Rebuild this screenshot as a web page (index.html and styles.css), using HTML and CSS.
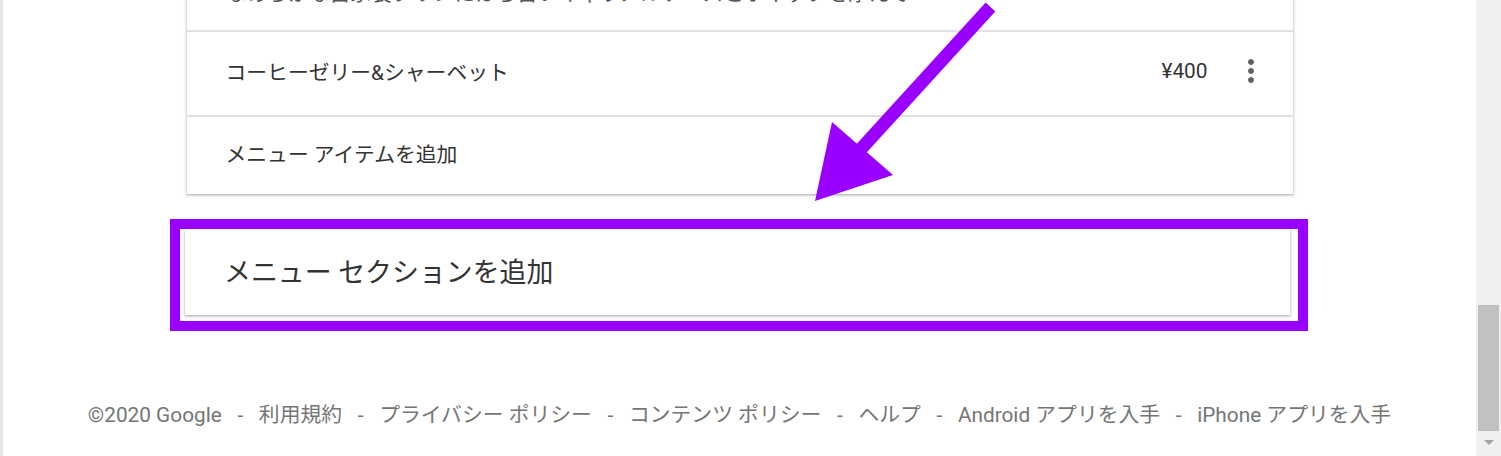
FILE: index.html
```html
<!DOCTYPE html>
<html lang="ja">
<head>
    <meta charset="UTF-8">
    <title>メニュー</title>
    <link rel="stylesheet" href="styles.css">
</head>
<body>
<div class="page">
    <main class="content">
        <section class="menu-card">
            <div class="item item-long">
                <div class="item-text">
                    <div class="item-name">自家製プリン</div>
                    <div class="item-desc">なめらかな自家製プリンにほろ苦いキャラメルソースとホイップを添えて</div>
                </div>
            </div>
            <div class="item">
                <div class="item-name">コーヒーゼリー&amp;シャーベット</div>
                <div class="item-price">¥400</div>
                <button class="more" aria-label="その他">
                    <svg viewBox="0 0 24 24" width="36" height="36"><path d="M12 8c1.1 0 2-.9 2-2s-.9-2-2-2-2 .9-2 2 .9 2 2 2zm0 2c-1.1 0-2 .9-2 2s.9 2 2 2 2-.9 2-2-.9-2-2-2zm0 6c-1.1 0-2 .9-2 2s.9 2 2 2 2-.9 2-2-.9-2-2-2z"/></svg>
                </button>
            </div>
            <div class="item item-add">メニュー アイテムを追加</div>
        </section>

        <div class="highlight">
            <div class="add-section">メニュー セクションを追加</div>
        </div>

        <footer class="footer">
            <span>©2020 Google</span>
            <span class="sep">-</span>
            <a>利用規約</a>
            <span class="sep">-</span>
            <a>プライバシー ポリシー</a>
            <span class="sep">-</span>
            <a>コンテンツ ポリシー</a>
            <span class="sep">-</span>
            <a>ヘルプ</a>
            <span class="sep">-</span>
            <a>Android アプリを入手</a>
            <span class="sep">-</span>
            <a>iPhone アプリを入手</a>
        </footer>
    </main>

    <div class="scrollbar">
        <div class="thumb"></div>
        <div class="arrow-down"></div>
    </div>

    <svg class="pointer" width="1501" height="456" viewBox="0 0 1501 456">
        <line x1="990.5" y1="7" x2="860" y2="150" stroke="#9900ff" stroke-width="13"/>
        <polygon points="832,122 893,175 815,201" fill="#9900ff"/>
    </svg>
</div>
</body>
</html>
```

FILE: styles.css
```css
html, body {
    margin: 0;
    height: 100%;
}
body {
    background: #FFF;
    overflow: hidden;
    font-family: Roboto, "Noto Sans CJK JP", sans-serif;
    color: #333;
}
.page {
    position: relative;
    display: flex;
    height: 456px;
    overflow: hidden;
}
.content {
    flex: 1;
    border-left: 3px solid #e6e6ea;
    display: flex;
    flex-direction: column;
    align-items: center;
}
.menu-card {
    width: 1106px;
    margin-top: -72px;
    background: #FFF;
    box-shadow: 0 1px 2px rgba(60, 64, 67, 0.3), 0 1px 3px 1px rgba(60, 64, 67, 0.15);
}
.item {
    display: flex;
    align-items: center;
    height: 78px;
    padding: 0 21px 5px 39px;
    font-size: 20.8px;
    border-top: 2px solid #e0e0e4;
}
.item:first-child {
    border-top: none;
}
.item-long {
    height: auto;
    padding-top: 20px;
    padding-bottom: 22px;
}
.item-long .item-name {
    line-height: 28px;
    margin-bottom: 4px;
}
.item-desc {
    line-height: 28px;
    color: #555;
}
.item-add {
    height: 72px;
}
.item-name {
    flex: 1;
}
.item-price {
    margin-right: 22px;
}
.more {
    display: flex;
    align-items: center;
    justify-content: center;
    width: 42px;
    height: 42px;
    padding: 0;
    border: none;
    background: none;
    fill: #5f6368;
}
.highlight {
    width: 1138px;
    box-sizing: border-box;
    margin-top: 25px;
    margin-left: -1px;
    padding: 1px 8px 6px 5px;
    border: 10px solid #9900ff;
}
.add-section {
    display: flex;
    align-items: center;
    height: 81px;
    padding: 0 0 4px 39px;
    font-size: 26.9px;
    background: #FFF;
    box-shadow: 0 1px 2px rgba(60, 64, 67, 0.3), 0 1px 3px 1px rgba(60, 64, 67, 0.15);
}
.footer {
    margin-top: 69px;
    line-height: 30px;
    font-size: 20.8px;
    color: #757575;
    white-space: nowrap;
}
.footer .sep {
    margin: 0 10.5px;
}
.scrollbar {
    width: 25px;
    background: #f0f0f0;
    display: flex;
    flex-direction: column;
    align-items: center;
}
.thumb {
    width: 21px;
    height: 126px;
    margin-top: 305px;
    background: #c1c1c1;
}
.arrow-down {
    margin-top: 9px;
    width: 0;
    height: 0;
    border-left: 5px solid transparent;
    border-right: 5px solid transparent;
    border-top: 5px solid #a3a3a3;
}
.pointer {
    position: absolute;
    top: 0;
    left: 0;
    pointer-events: none;
}
```
